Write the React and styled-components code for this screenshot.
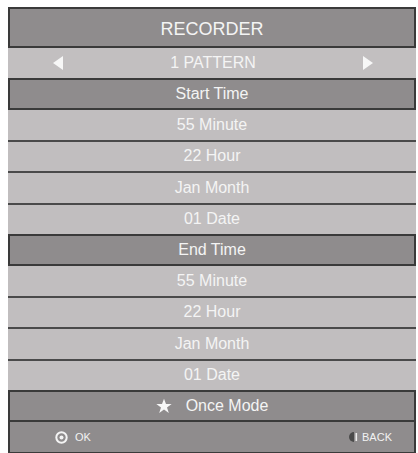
import styled, { createGlobalStyle } from "styled-components";

const GlobalStyle = createGlobalStyle`
  body {
    margin: 0;
    background: #ffffff;
    font-family: "Liberation Sans", Arial, sans-serif;
  }
`;

function App() {
  const start = ["55 Minute", "22 Hour", "Jan Month", "01 Date"];
  const end = ["55 Minute", "22 Hour", "Jan Month", "01 Date"];

  return (
    <>
      <GlobalStyle />
      <Panel>
        <Title>RECORDER</Title>
        <Pattern>
          <Arrow viewBox="0 0 10 14">
            <polygon points="10,0 10,14 0,7" />
          </Arrow>
          <span>1 PATTERN</span>
          <Arrow viewBox="0 0 10 14">
            <polygon points="0,0 0,14 10,7" />
          </Arrow>
        </Pattern>
        <Heading>Start Time</Heading>
        <Group>
          {start.map((t, i) => (
            <Item key={i}>{t}</Item>
          ))}
        </Group>
        <Heading>End Time</Heading>
        <Group>
          {end.map((t, i) => (
            <Item key={i}>{t}</Item>
          ))}
        </Group>
        <Heading>
          <Star viewBox="0 0 24 24">
            <polygon points="12,1 15,9 23.5,9 16.5,14.2 19.2,22.5 12,17.4 4.8,22.5 7.5,14.2 0.5,9 9,9" />
          </Star>
          Once Mode
        </Heading>
        <Footer>
          <Hint>
            <svg width="13" height="13" viewBox="0 0 13 13">
              <circle cx="6.5" cy="6.5" r="5.2" fill="none" stroke="#f4f4f4" strokeWidth="2" />
              <circle cx="6.5" cy="6.5" r="2" fill="#f4f4f4" />
            </svg>
            OK
          </Hint>
          <Hint>
            <svg width="9" height="10" viewBox="0 0 9 10">
              <path d="M5 0 A5 5 0 0 0 5 10 Z" fill="#4a4a4a" />
              <rect x="6.5" y="1" width="1.6" height="8" fill="#eeeeee" />
            </svg>
            BACK
          </Hint>
        </Footer>
      </Panel>
    </>
  );
}

const Panel = styled.div`
  width: 408px;
  margin: 7px 0 0 8px;
  display: flex;
  flex-direction: column;
  color: #f4f4f4;
  font-size: 16px;
`;

const Box = styled.div`
  display: flex;
  align-items: center;
  justify-content: center;
  gap: 12px;
  box-sizing: border-box;
  height: 32px;
  background: #8f8c8d;
  border: 2px solid #3a3a3a;
`;

const Title = styled(Box)`
  height: 41px;
  font-size: 18px;
  padding-top: 3px;
`;

const Heading = styled(Box)``;

const Pattern = styled.div`
  display: flex;
  align-items: center;
  justify-content: space-between;
  height: 30px;
  padding: 0 43px 0 45px;
  background: #c2bfc0;
`;

const Arrow = styled.svg`
  width: 10px;
  height: 14px;
  fill: #f7f7f7;
`;

const Group = styled.div`
  display: flex;
  flex-direction: column;
  background: #c1bebf;
`;

const Item = styled.div`
  display: flex;
  align-items: center;
  justify-content: center;
  height: 29.5px;
  & + & {
    border-top: 2px solid #4a4a4a;
  }
`;

const Star = styled.svg`
  width: 16px;
  height: 16px;
  fill: #f7f7f7;
  margin-right: 2px;
`;

const Footer = styled(Box)`
  justify-content: space-between;
  height: 32px;
  border-top: none;
  padding: 0 22px 0 45px;
`;

const Hint = styled.div`
  display: flex;
  align-items: center;
  gap: 7px;
  font-size: 11px;
  color: #f2f2f2;
  &:last-child {
    gap: 4px;
  }
`;

export default App;
